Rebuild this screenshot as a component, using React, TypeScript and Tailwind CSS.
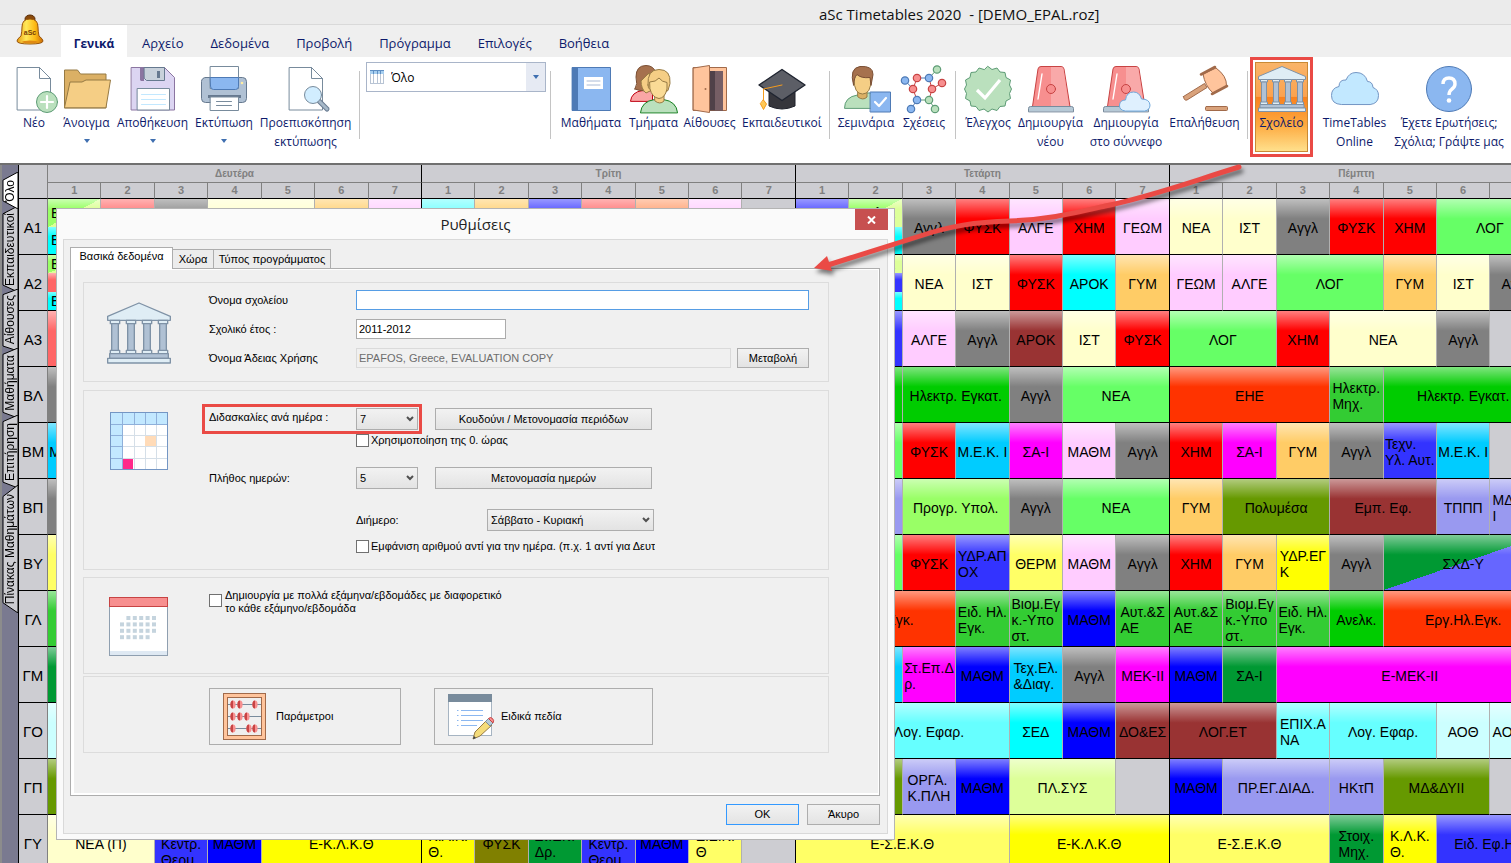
import type { ReactNode } from 'react';

type Cell = { text?: string; color?: string; span?: number; parts?: { text: string; color: string }[] };

const COLORS: Record<string, string> = {
  red: 'bg-[#ff0000]',
  salmon: 'bg-[#ff6666]',
  peach: 'bg-[#ff9966]',
  gray: 'bg-[#808080]',
  cream: 'bg-[#ffffcc]',
  pink: 'bg-[#ffccff]',
  orange: 'bg-[#ffcc66]',
  cyan: 'bg-[#00ffff]',
  aqua: 'bg-[#66ffff]',
  ice: 'bg-[#ccffff]',
  sky: 'bg-[#00ccff]',
  indigo: 'bg-[#3333ff]',
  blue: 'bg-[#0000ff]',
  lilac: 'bg-[#9999f0]',
  magenta: 'bg-[#ff00ff]',
  mint: 'bg-[#66ff66]',
  lime: 'bg-[#99ff66]',
  pale: 'bg-[#ddff99]',
  grass: 'bg-[#33cc33]',
  green: 'bg-[#00cc00]',
  forest: 'bg-[#009933]',
  moss: 'bg-[#669900]',
  olive: 'bg-[#808000]',
  brown: 'bg-[#993333]',
  flame: 'bg-[#ff3300]',
  lemon: 'bg-[#ffff66]',
  yellow: 'bg-[#ffff00]',
  split: 'bg-linear-[to_bottom_right,#009933_50%,#6666ff_50%]',
  limeSplit: 'bg-linear-[to_bottom_right,#99ff66_50%,#ddff99_50%]',
  none: 'bg-[#cdcdd2]',
};

const c = (text: string, color: string, span = 1): Cell => ({ text, color, span });
const e = (span = 1): Cell => ({ text: '', color: 'none', span });

const AGGL = c('Αγγλ', 'gray');
const FYSK = c('ΦΥΣΚ', 'red');
const HIM = c('ΧΗΜ', 'red');
const ALGE = c('ΑΛΓΕ', 'pink');
const GEOM = c('ΓΕΩΜ', 'pink');
const MATHP = c('ΜΑΘΜ', 'pink');
const MATHB = c('ΜΑΘΜ', 'blue');
const NEA = c('ΝΕΑ', 'cream');
const IST = c('ΙΣΤ', 'cream');
const GYM = c('ΓΥΜ', 'orange');
const LOG2 = c('ΛΟΓ', 'mint', 2);
const VIOM = c('Βιομ.Εγ\nκ.-Υπο\nστ.', 'grass');
const EID = c('Ειδ. Ηλ.\nΕγκ.', 'grass');
const AYT = c('Αυτ.&Σ\nΑΕ', 'grass');
const THERM = c('\nΚεντρ.\nΘερμ.', 'indigo');

const ROWS: { name: string; cells: Cell[] }[] = [
  {
    name: 'Α1',
    cells: [
      { parts: [{ text: 'Ε', color: 'limeSplit' }, { text: 'Ε', color: 'cyan' }] },
      c('', 'salmon'), c('', 'gray'), c('', 'cream', 2), c('', 'orange'), c('', 'pink'),
      c('', 'aqua'), c('', 'orange'), c('', 'indigo'), c('', 'salmon'), c('', 'peach'), c('', 'pink'), e(),
      c('', 'indigo'),
      { parts: [{ text: 'Αγγλ Λ', color: 'limeSplit' }, { text: 'Αγγλ ς', color: 'cyan' }] },
      AGGL, FYSK, ALGE, HIM, GEOM, NEA, IST, AGGL, FYSK, HIM, LOG2,
    ],
  },
  {
    name: 'Α2',
    cells: [
      { parts: [{ text: 'Ε', color: 'limeSplit' }, { text: '', color: 'salmon' }, { text: 'Ε', color: 'cyan' }] },
      e(14),
      { parts: [{ text: 'Αγγλ Λ', color: 'pale' }, { text: '', color: 'indigo' }, { text: 'Αγγλ κ', color: 'cyan' }] },
      NEA, IST, FYSK, c('ΑΡΟΚ', 'cyan'), GYM, GEOM, ALGE, LOG2, GYM, IST, AGGL,
    ],
  },
  {
    name: 'Α3',
    cells: [
      c('', 'salmon'), e(14), c('', 'indigo'),
      ALGE, AGGL, c('ΑΡΟΚ', 'brown'), IST, FYSK, LOG2, HIM, c('ΝΕΑ', 'cream', 2), AGGL, e(),
    ],
  },
  {
    name: 'ΒΛ',
    cells: [
      c('', 'gray'), e(14), c('', 'green'),
      c('Ηλεκτρ. Εγκατ.', 'green', 2), AGGL, c('ΝΕΑ', 'mint', 2),
      c('ΕΗΕ', 'flame', 3), c('Ηλεκτρ.\nΜηχ.', 'grass'), c('Ηλεκτρ. Εγκατ.', 'green', 3),
    ],
  },
  {
    name: 'ΒΜ',
    cells: [
      c('Μ.Ε.Κ. Ι', 'sky'), e(14), c('', 'mint'),
      FYSK, c('Μ.Ε.Κ. Ι', 'sky'), c('ΣΑ-Ι', 'magenta'), MATHP, AGGL,
      HIM, c('ΣΑ-Ι', 'magenta'), GYM, AGGL, c('Τεχν.\nΥλ. Αυτ.', 'indigo'), c('Μ.Ε.Κ. Ι', 'sky'), e(),
    ],
  },
  {
    name: 'ΒΠ',
    cells: [
      c('', 'gray'), e(14), c('', 'lilac'),
      c('Προγρ. Υπολ.', 'lime', 2), AGGL, c('ΝΕΑ', 'mint', 2),
      GYM, c('Πολυμέσα', 'moss', 2), c('Εμπ. Εφ.', 'brown', 2), c('ΤΠΠΠ', 'lilac'), c('ΜΔ&ΔΥ\nΙ', 'lilac'),
    ],
  },
  {
    name: 'ΒΥ',
    cells: [
      c('', 'lemon'), e(14), c('', 'mint'),
      FYSK, c('ΥΔΡ.ΑΠ\nΟΧ', 'indigo'), c('ΘΕΡΜ', 'lemon'), MATHP, AGGL,
      HIM, GYM, c('ΥΔΡ.ΕΓ\nΚ', 'yellow'), AGGL, c('ΣΧΔ-Υ', 'split', 3),
    ],
  },
  {
    name: 'ΓΛ',
    cells: [
      c('', 'grass'), e(13), c('Εργ.Ηλ.Εγκ.', 'flame', 3),
      EID, VIOM, MATHB, AYT, AYT, VIOM, EID, c('Ανελκ.', 'green'), c('Εργ.Ηλ.Εγκ.', 'flame', 3),
    ],
  },
  {
    name: 'ΓΜ',
    cells: [
      c('', 'forest'), e(14), c('', 'sky'),
      c('Στ.Επ.Δ\nρ.', 'magenta'), MATHB, c('Τεχ.Ελ.\n&Διαγ.', 'sky'), AGGL, c('ΜΕΚ-ΙΙ', 'magenta'),
      MATHB, c('ΣΑ-Ι', 'forest'), c('Ε-ΜΕΚ-ΙΙ', 'magenta', 5),
    ],
  },
  {
    name: 'ΓΟ',
    cells: [
      c('', 'ice'), e(14), c('Λογ. Εφαρ.', 'aqua', 3), c('ΣΕΔ', 'cyan'), MATHB, c('ΔΟ&ΕΣ', 'brown'),
      c('ΛΟΓ.ΕΤ', 'brown', 2), c('ΕΠΙΧ.Α\nΝΑ', 'aqua'), c('Λογ. Εφαρ.', 'aqua', 2), c('ΑΟΘ', 'ice'), c('ΑΟ&ΔΕ', 'ice'),
    ],
  },
  {
    name: 'ΓΠ',
    cells: [
      c('', 'moss'), e(14), c('', 'moss'),
      c('ΟΡΓΑ.\nΚ.ΠΛΗ', 'lilac'), MATHB, c('ΠΛ.ΣΥΣ', 'pale', 2), e(),
      MATHB, c('ΠΡ.ΕΓ.ΔΙΑΔ.', 'lilac', 2), c('ΗΚτΠ', 'lilac'), c('ΜΔ&ΔΥΙΙ', 'moss', 2), e(),
    ],
  },
  {
    name: 'ΓΥ',
    cells: [
      c('ΝΕΑ (Π)', 'cream', 2), THERM, MATHB, c('Ε-Κ.Λ.Κ.Θ', 'yellow', 3),
      c('Κ.Λ.Κ.\nΘ.', 'yellow'), c('ΦΥΣΚ', 'olive'), c('Στ.Επ.\nΔρ.', 'forest'), THERM, MATHB, c('Ε.Σ.Κ.\nΘ', 'lemon'), e(),
      c('Ε-Σ.Ε.Κ.Θ', 'lemon', 4), c('Ε-Κ.Λ.Κ.Θ', 'yellow', 3),
      c('Ε-Σ.Ε.Κ.Θ', 'lemon', 3), c('Στοιχ.\nΜηχ.', 'forest'), c('Κ.Λ.Κ.\nΘ.', 'yellow'), c('Ειδ. Εφ.Ηλ.', 'indigo', 2),
    ],
  },
];

const DAYS = ['Δευτέρα', 'Τρίτη', 'Τετάρτη', 'Πέμπτη'];
const PERIODS = [1, 2, 3, 4, 5, 6, 7];

const shine = 'bg-linear-to-b from-white/50 to-white/0 to-36%';

function TimetableCell({ cell, lastOfDay }: { cell: Cell; lastOfDay: boolean }) {
  const border = lastOfDay ? 'border-r-black' : 'border-r-[#b0b0b0]';
  return (
    <td colSpan={cell.span ?? 1} className={`h-[56px] border-r border-b border-b-black p-0 ${border}`}>
      {cell.parts ? (
        <div className="flex h-[55px] flex-col">
          {cell.parts.map((p, i) => (
            <div key={i} className={`min-h-0 flex-1 overflow-hidden ${COLORS[p.color]}`}>
              <div className={`flex h-full items-center whitespace-pre pl-[3px] ${shine}`}>{p.text}</div>
            </div>
          ))}
        </div>
      ) : (
        <div className={`h-[55px] ${COLORS[cell.color ?? 'none']}`}>
          <div className={`flex h-full items-center justify-center overflow-hidden pt-[2px] ${cell.color === 'none' ? '' : shine}`}>
            <span className="whitespace-pre text-left">{cell.text}</span>
          </div>
        </div>
      )}
    </td>
  );
}

function TimetableRow({ name, cells }: { name: string; cells: Cell[] }) {
  let col = 0;
  return (
    <tr>
      <th scope="row" className="border-r border-b border-r-[#808080] border-b-black bg-[#cdcdd2] p-0 pt-[2px] text-center text-[15px] font-normal">
        {name}
      </th>
      {cells.map((cell, i) => {
        col += cell.span ?? 1;
        return <TimetableCell key={i} cell={cell} lastOfDay={col % 7 === 0} />;
      })}
    </tr>
  );
}

function Timetable() {
  return (
    <table className="w-[102.2%] table-fixed border-separate border-spacing-0 text-[14px] leading-[16px] text-black">
      <colgroup>
        <col className="w-[29px]" />
        {DAYS.map((d) => PERIODS.map((p) => <col key={d + p} />))}
      </colgroup>
      <thead className="bg-[#cdcdd2] text-[10px] text-[#808080]">
        <tr>
          <th rowSpan={2} className="border-r border-b border-r-[#808080] border-b-black p-0" />
          {DAYS.map((d) => (
            <th key={d} colSpan={7} className="h-[18px] border-r border-b border-r-black border-b-[#808080] p-0 leading-[16px]">
              {d}
            </th>
          ))}
        </tr>
        <tr>
          {DAYS.map((d) =>
            PERIODS.map((p) => (
              <th
                key={d + p}
                className={`h-[16px] border-r border-b border-b-black p-0 text-[11px] leading-[15px] ${p === 7 ? 'border-r-black' : 'border-r-[#808080]'}`}
              >
                {p}
              </th>
            )),
          )}
        </tr>
      </thead>
      <tbody>
        {ROWS.map((r) => (
          <TimetableRow key={r.name} name={r.name} cells={r.cells} />
        ))}
      </tbody>
    </table>
  );
}

const VIEWS = [
  { label: 'Όλο', size: 'h-[37px]', active: true },
  { label: 'Εκπαιδευτικοί', size: 'h-[86px]' },
  { label: 'Αίθουσες', size: 'h-[62px]' },
  { label: 'Μαθήματα', size: 'h-[70px]' },
  { label: 'Επιτήρηση', size: 'h-[73px]' },
  { label: 'Πίνακας Μαθημάτων', size: 'h-[128px]' },
];

function ViewTabs() {
  return (
    <nav className="flex w-[19px] shrink-0 flex-col items-stretch border-r border-l-2 border-r-black border-l-[#8c8c8c] bg-[#7a7a90] pt-[7px]">
      {VIEWS.map((v) => (
        <button
          key={v.label}
          type="button"
          className={`relative -mb-[3px] flex items-center justify-center text-[12px] leading-[16px] text-black ${v.size} ${v.active ? 'z-10' : ''}`}
        >
          <svg className="absolute inset-0 h-full w-full" viewBox="0 0 16 100" preserveAspectRatio="none">
            <polygon
              points={v.active ? '16,0 1,22 1,78 16,100' : '16,0 1,9 1,92 16,100'}
              fill={v.active ? '#ffffff' : '#cdcdd2'}
              stroke="#000"
              vectorEffect="non-scaling-stroke"
            />
          </svg>
          <span className="relative rotate-180 whitespace-nowrap [writing-mode:vertical-rl]">{v.label}</span>
        </button>
      ))}
    </nav>
  );
}

/* ---------- icons ---------- */

function Icon({ children }: { children: ReactNode }) {
  return (
    <svg className="h-[48px] w-[48px] shrink-0 overflow-visible" viewBox="0 0 48 48" fill="none" strokeLinejoin="round" strokeLinecap="round">
      {children}
    </svg>
  );
}

const Sheet = () => (
  <path d="M7.500 2.500h22l11 11v31.500h-33z M29.500 2.500v11h11" fill="#fff" stroke="#788b9c" strokeLinejoin="miter" />
);

const NewIcon = () => (
  <Icon>
    <Sheet />
    <circle cx="37" cy="37" r="10.500" fill="#bae0bd" stroke="#5e9c76" />
    <path d="M37 31v12M31 37h12" stroke="#fff" strokeWidth="2.200" />
  </Icon>
);

const OpenIcon = () => (
  <Icon>
    <path d="M1.500 42.500v-37.500h13l3 4h25.500v33.500z" fill="#dbb065" stroke="#967a44" />
    <path d="M1.500 42.500l5.500-25.500h12l4-2h24.500l-4.500 27.500z" fill="#f5ce85" stroke="#967a44" />
  </Icon>
);

const SaveIcon = () => (
  <Icon>
    <path d="M2.500 2.500h33l10 10v32.500h-43z" fill="#dcd5f2" stroke="#8b75a1" />
    <path d="M11 3h4v13h-3l-1-1z" fill="#8b75a1" />
    <path d="M15.500 2.500h20v13h-18l-2-2z" fill="#c8d1db" stroke="#66798f" />
    <path d="M28 6h3v7h-3z" fill="#66798f" />
    <path d="M8.500 23.500h32v21.500h-32z" fill="#fff" stroke="#788b9c" />
    <path d="M12.500 29.500h24M12.500 34.500h24M12.500 39.500h24" stroke="#c2e8ff" />
  </Icon>
);

const PrintIcon = () => (
  <Icon>
    <rect x="1.500" y="12.500" width="45" height="25" rx="4" fill="#b0c1d4" stroke="#66798f" />
    <path d="M10.500 1.500h28v22h-28z" fill="#fff" stroke="#788b9c" />
    <path d="M10.500 12.500h28v9q0 3-3 3h-22q-3 0-3-3z" fill="#8bb7f0" stroke="#4e7ab5" />
    <rect x="8" y="30" width="33" height="3" fill="#66798f" />
    <path d="M10.500 32h28v13.500h-28z" fill="#fff" stroke="#788b9c" />
    <path d="M16.500 36.500h15M16.500 40.500h15" stroke="#788b9c" />
    <circle cx="42" cy="18" r="1.300" fill="#ffeea3" />
  </Icon>
);

const PreviewIcon = () => (
  <Icon>
    <Sheet />
    <path d="M37 36l8 8" stroke="#66798f" strokeWidth="5" />
    <path d="M37 36l8 8" stroke="#a6b8c8" strokeWidth="3" />
    <circle cx="31" cy="30" r="8.500" fill="#d1edff" stroke="#788b9c" />
  </Icon>
);

const BookIcon = () => (
  <Icon>
    <rect x="5.500" y="2.500" width="38" height="43" fill="#8bb7f0" stroke="#4e7ab5" />
    <rect x="5" y="2" width="6" height="44" fill="#4e7ab5" />
    <rect x="17" y="12" width="19" height="12" fill="#fff" />
    <path d="M20 16h13M20 20h13" stroke="#a9bad6" />
  </Icon>
);

const ClassesIcon = () => (
  <Icon>
    <path d="M.5 36q1-9 12-10.500h10v10.500z" fill="#faa6a6" stroke="#c00010" />
    <path d="M5 24q3-5 1-12Q6 .500 16 .500q8 0 10 8l-3 16q-10 3-18-.5z" fill="#a6714e" stroke="#7a4f34" />
    <path d="M11 16l8-8 3 17-6 3q-5-4-5-12z" fill="#f5ce85" stroke="#967a44" />
    <path d="M10.500 47.500q1-11 14-13h9q13 2 14 13z" fill="#bae0bd" stroke="#168020" />
    <path d="M25 29h9v7q-4 4-9 0z" fill="#f5ce85" stroke="#967a44" />
    <path d="M18 20Q17 4.500 29 4.500q12 0 11 14l-2 7-9 4-9-5q-2-1-2-4.500z" fill="#f5ce85" stroke="#967a44" />
    <path d="M20 17q6 0 9-4 3 4 8 4.500V24q-2 9-8 9.500-7-1-9-9.500z" fill="#fadb96" stroke="#967a44" />
  </Icon>
);

const DoorIcon = () => (
  <Icon>
    <path d="M7.500 2.500h33v43h-33z" fill="#ffc49c" stroke="#a16a4a" />
    <path d="M11 6h26v39.500H11z" fill="#504149" />
    <path d="M29 6h8v39.500h-8z" fill="#765e65" />
    <path d="M7.500 3l16-2.500v47L7.500 45z" fill="#ffc49c" stroke="#a16a4a" />
    <circle cx="19.500" cy="24" r="1" fill="#a16a4a" />
  </Icon>
);

const TeacherIcon = () => (
  <Icon>
    <path d="M11 24v17q13 6 26 0V24z" fill="#36363c" stroke="#1f212b" />
    <path d="M24 4.500L47 20 24 35.500 1 20z" fill="#5c5e66" stroke="#1f2430" strokeWidth="1.400" />
    <path d="M24 20L5.500 24v14" stroke="#f59b1d" />
    <path d="M5.500 35l3 4-3 5.500-3-5.500z" fill="#ffc957" stroke="#f59b1d" />
  </Icon>
);

const SeminarIcon = () => (
  <Icon>
    <path d="M2.500 43q0-11 13-13l4-2h8l6 3v12z" fill="#bae0bd" stroke="#5e9c76" />
    <path d="M16 25h9v7q-4 4-9 0z" fill="#dbb065" stroke="#967a44" />
    <path d="M12 14q0-7 8.500-7T29 14q0 15-8.500 15T12 14z" fill="#f5ce85" stroke="#967a44" />
    <path d="M11.500 20Q7 3 18 1.500q13-1 13 8l-2 11-1-8q-9 1-13-3-3 3-3.500 10.500z" fill="#a6714e" stroke="#7a4f34" />
    <rect x="28.500" y="27" width="20" height="20" fill="#8bb7f0" stroke="#4e7ab5" />
    <path d="M33 37l4 4 7-8" stroke="#fff" strokeWidth="2.200" />
  </Icon>
);

const NODES: [number, number, string, string][] = [
  [17, 13, '#f78f8f', '#c74343'],
  [29, 13, '#8bb7f0', '#4e7ab5'],
  [13, 24, '#f78f8f', '#c74343'],
  [32, 24, '#f78f8f', '#c74343'],
  [17, 35, '#8bb7f0', '#4e7ab5'],
  [29, 35, '#bae0bd', '#5e9c76'],
  [37, 4.5, '#bae0bd', '#5e9c76'],
  [42, 18, '#f78f8f', '#c74343'],
  [5, 15.5, '#8bb7f0', '#4e7ab5'],
  [11, 44, '#8bb7f0', '#4e7ab5'],
  [35, 44, '#bae0bd', '#5e9c76'],
];

const RelationsIcon = () => (
  <Icon>
    <path d="M29 13l3 11 10-6M32 24l-3 11M17 35l-4-11 4-11" stroke="#c74343" />
    <path d="M5 15.500l8 8.500M17 13h12M17 35l-6 9" stroke="#4e7ab5" />
    <path d="M29 13l8-8.500M17 35h12l6 9" stroke="#5e9c76" />
    {NODES.map(([x, y, fill, stroke], i) => (
      <circle key={i} cx={x} cy={y} r="3.700" fill={fill} stroke={stroke} strokeWidth="1.200" />
    ))}
  </Icon>
);

const CheckIcon = () => (
  <Icon>
    <path
      d="M24 1.500l4 3 5-1.500 3 4 5 .5 1 5 4.500 2.500-1 5 2 4-2 4.500 1 5-4.500 2.500-1 5-5 .5-3 4-5-1.500-4 3-4-3-5 1.500-3-4-5-.5-1-5-4.500-2.500 1-5-2-4.500 2-4-1-5L6 12.500l1-5 5-.5 3-4 5 1.500z"
      fill="#bae0bd"
      stroke="#5e9c76"
    />
    <path d="M13 25l8 8 15-18" stroke="#fff" strokeWidth="3.200" strokeLinecap="butt" strokeLinejoin="miter" />
  </Icon>
);

const Siren = () => (
  <>
    <path d="M5.500 41.500L11 4q.500-2.500 3-2.500h20q2.500 0 3 2.500l6 37.500z" fill="#f78f8f" stroke="#c74343" />
    <path d="M24 2h10q2 0 2.500 2l5.500 37H24z" fill="#f9a9a9" />
    <path d="M15 9l-4 25" stroke="#fff" strokeWidth="1.400" />
    <circle cx="24" cy="24" r="4.500" fill="#f78f8f" stroke="#c74343" />
    <path d="M1.500 46.500v-3q0-2 2-2h41q2 0 2 2v3z" fill="#b6c9d6" stroke="#788b9c" />
  </>
);

const SirenIcon = () => (
  <Icon>
    <Siren />
  </Icon>
);

const SirenCloudIcon = () => (
  <Icon>
    <Siren />
    <path d="M23 46q-6-1-5.500-6t6-5q1-8 8-8 6 0 8 7 8 0 8.500 6 0 5-5 6z" fill="#dff0fe" stroke="#6fa8dc" />
  </Icon>
);

const GavelIcon = () => (
  <Icon>
    <path d="M2.500 31.500l21-13 2.500 4-20 12.500q-3 1-3.500-3.500z" fill="#d9a27b" stroke="#a16a4a" />
    <path d="M22 9l13-6q11 8 10.500 18L32 28q-8-7-10-19z" fill="#ffc49c" stroke="#a16a4a" />
    <path d="M20 9.500L34 2M31 29l15-8" stroke="#a16a4a" strokeWidth="2.600" />
    <rect x="24.500" y="41.500" width="22" height="4" rx="1" fill="#d9a27b" stroke="#a16a4a" />
  </Icon>
);

function Building({ className }: { className: string }) {
  return (
    <svg className={className} viewBox="0 0 48 48" fill="none" strokeLinejoin="round">
      <path d="M.5 14.500v-3L24 1.500l23.500 10v3z" fill="#dfedf5" stroke="#7f92a6" />
      {[3, 15, 27, 39].map((x) => (
        <g key={x}>
          <rect x={x - 0.5} y="14.500" width="7" height="2.500" fill="#dfedf5" stroke="#7f92a6" />
          <rect x={x + 0.5} y="17" width="5" height="21" fill="#b0c1d4" stroke="#7f92a6" />
          <rect x={x - 0.5} y="37" width="7" height="2.500" fill="#dfedf5" stroke="#7f92a6" />
        </g>
      ))}
      <rect x="2" y="39.500" width="44" height="3.500" fill="#b0c1d4" stroke="#7f92a6" />
      <rect x=".5" y="43" width="47" height="3.500" fill="#dfedf5" stroke="#7f92a6" />
    </svg>
  );
}

const CloudIcon = () => (
  <Icon>
    <path
      d="M10 39.500Q.5 39 .5 30.500.500 23 8 21.500q0-7 7-6.500Q18 7.500 25 7.500q9 0 11.500 9 5 0 5.500 6 5.500 2 5.500 8 0 8-8 9z"
      fill="#c2e8ff"
      stroke="#7496c4"
    />
  </Icon>
);

const HelpIcon = () => (
  <Icon>
    <circle cx="24" cy="24" r="22.500" fill="#8bb7f0" stroke="#4e7ab5" />
    <path d="M18 19q0-6 6-6t6 6q0 3-3.500 5.500Q24 26.500 24 30" stroke="#fff" strokeWidth="3.400" strokeLinecap="butt" />
    <circle cx="24" cy="35.500" r="2.300" fill="#fff" />
  </Icon>
);

function BellIcon() {
  return (
    <svg className="absolute top-[14px] left-[16px] h-[31px] w-[28px]" viewBox="0 0 28 31">
      <defs>
        <linearGradient id="bell" x1="0" x2="1">
          <stop offset="0" stopColor="#e89a10" />
          <stop offset=".35" stopColor="#ffe95a" />
          <stop offset=".7" stopColor="#fdb913" />
          <stop offset="1" stopColor="#c96a08" />
        </linearGradient>
      </defs>
      <ellipse cx="14" cy="5" rx="5" ry="4" fill="#8a4a0c" stroke="#5a2c05" />
      <path d="M5 22q1-5 1-9 0-8 8-8t8 8q0 4 1 9 4 3 4 5 0 3-13 3T1 27q0-2 4-5z" fill="url(#bell)" stroke="#9a560c" />
      <ellipse cx="14" cy="28" rx="8" ry="1.500" fill="#e08a12" />
      <text x="14" y="21" textAnchor="middle" fontFamily="Liberation Sans" fontWeight="bold" fontSize="7" fill="#7a3f06">
        aSc
      </text>
    </svg>
  );
}

/* ---------- ribbon ---------- */

const MENU = ['Αρχείο', 'Δεδομένα', 'Προβολή', 'Πρόγραμμα', 'Επιλογές', 'Βοήθεια'];

function RibbonButton({ icon, label, width, arrow }: { icon: ReactNode; label: string; width: string; arrow?: boolean }) {
  return (
    <button type="button" className={`flex shrink-0 flex-col items-center whitespace-pre text-[#0d1a6b] ${width}`}>
      {icon}
      <span>{label}</span>
      {arrow ? (
        <svg className="mt-[7px] h-[4px] w-[6px]" viewBox="0 0 6 4">
          <path d="M0 0h6L3 4z" fill="#3f6fb0" />
        </svg>
      ) : null}
    </button>
  );
}

const Separator = ({ className }: { className: string }) => (
  <div className={`mt-[6px] h-[68px] w-px shrink-0 bg-[#c4c4c4] ${className}`} />
);

function Ribbon() {
  return (
    <div className="flex h-[106px] items-start bg-white pt-[8px] pl-[10px] text-[12px] leading-[19px]">
      <RibbonButton icon={<NewIcon />} label="Νέο" width="w-[48px]" />
      <RibbonButton icon={<OpenIcon />} label="Άνοιγμα" width="w-[57px]" arrow />
      <RibbonButton icon={<SaveIcon />} label="Αποθήκευση" width="w-[75px]" arrow />
      <RibbonButton icon={<PrintIcon />} label="Εκτύπωση" width="w-[68px]" arrow />
      <RibbonButton icon={<PreviewIcon />} label={'Προεπισκόπηση\nεκτύπωσης'} width="w-[95px]" />
      <Separator className="mr-[6px] ml-[6px]" />
      <div className="relative -mt-[3px] flex h-[30px] w-[180px] shrink-0 border border-[#a9b5c9]">
        <svg className="absolute top-[7px] left-[3px] h-[14px] w-[14px]" viewBox="0 0 14 14">
          <path d="M0 0h14v4H0z" fill="#a7cff0" />
          <path d="M.5 4v9.500M3.500 4v9.500M7.500 4v9.500M10.500 4v9.500M13.500 4v9.500M0 13.500h14" stroke="#b8c4d4" />
          <path d="M0 .5h14M3.500 0v4M7.500 0v4M10.500 0v4" stroke="#5e8fc4" />
        </svg>
        <select aria-label="Προβολή" className="flex-1 appearance-none pl-[24px] text-[12px] text-black outline-none">
          <option>Όλο</option>
        </select>
        <span className="pointer-events-none absolute inset-y-0 right-0 flex w-[19px] items-center justify-center bg-[#e6eaf3]">
          <svg className="h-[4px] w-[6px]" viewBox="0 0 6 4">
            <path d="M0 0h6L3 4z" fill="#3f6fb0" />
          </svg>
        </span>
      </div>
      <Separator className="mr-[4px] ml-[4px]" />
      <RibbonButton icon={<BookIcon />} label="Μαθήματα" width="w-[72px]" />
      <RibbonButton icon={<ClassesIcon />} label="Τμήματα" width="w-[53px]" />
      <RibbonButton icon={<DoorIcon />} label="Αίθουσες" width="w-[59px]" />
      <RibbonButton icon={<TeacherIcon />} label="Εκπαιδευτικοί" width="w-[86px]" />
      <Separator className="mr-[5px] ml-[4px]" />
      <RibbonButton icon={<SeminarIcon />} label="Σεμινάρια" width="w-[62px]" />
      <RibbonButton icon={<RelationsIcon />} label="Σχέσεις" width="w-[54px]" />
      <Separator className="mr-[4px] ml-[4px]" />
      <RibbonButton icon={<CheckIcon />} label="Έλεγχος" width="w-[56px]" />
      <RibbonButton icon={<SirenIcon />} label={'Δημιουργία\nνέου'} width="w-[69px]" />
      <RibbonButton icon={<SirenCloudIcon />} label={'Δημιουργία\nστο σύννεφο'} width="w-[82px]" />
      <RibbonButton icon={<GavelIcon />} label="Επαλήθευση" width="w-[75px]" />
      <Separator className="mr-[2px] ml-[5px]" />
      <div className="-mt-[8px] shrink-0 border-3 border-[#ea4a45] p-[2px]">
        <button
          type="button"
          className="flex h-[90px] w-[53px] flex-col items-center border border-[#c98a35] bg-linear-[to_bottom,#f9b469_0%,#fba24f_38%,#f9821f_39%,#fda93f_70%,#ffe08c_100%] pt-[2px] text-[#0d1a6b]"
        >
          <Building className="h-[48px] w-[48px] shrink-0" />
          <span>Σχολείο</span>
        </button>
      </div>
      <RibbonButton icon={<CloudIcon />} label={'TimeTables\nOnline'} width="ml-[4px] w-[75px]" />
      <RibbonButton icon={<HelpIcon />} label={'Έχετε Ερωτήσεις;\nΣχόλια; Γράψτε μας'} width="w-[114px]" />
    </div>
  );
}

/* ---------- settings dialog ---------- */

const buttonStyle = 'border border-[#adadad] bg-linear-to-b from-[#f2f2f2] to-[#e3e3e3] text-center';

function SelectBox({ id, value, className }: { id: string; value: string; className: string }) {
  return (
    <div className={`relative h-[22px] shrink-0 ${className}`}>
      <select
        id={id}
        className="h-full w-full appearance-none border border-[#adadad] bg-linear-to-b from-[#f2f2f2] to-[#e3e3e3] pl-[3px] outline-none"
      >
        <option>{value}</option>
      </select>
      <svg className="pointer-events-none absolute top-[8px] right-[4px] h-[6px] w-[8px]" viewBox="0 0 8 6">
        <path d="M1 1l3 3 3-3" fill="none" stroke="#505050" strokeWidth="2" />
      </svg>
    </div>
  );
}

const Check = ({ id }: { id: string }) => (
  <input id={id} type="checkbox" className="h-[13px] w-[13px] shrink-0 appearance-none border border-[#707070] bg-white" />
);

function Group({ icon, children, className }: { icon?: ReactNode; children: ReactNode; className: string }) {
  return (
    <section className={`flex border border-[#dcdcdc] ${className}`}>
      <div className="flex w-[125px] shrink-0 justify-center pr-[16px]">{icon}</div>
      <div className="min-w-0 flex-1">{children}</div>
    </section>
  );
}

function WeekIcon() {
  return (
    <svg className="mt-[8px] h-[58px] w-[58px]" viewBox="0 0 58 58">
      <rect x=".5" y=".5" width="57" height="57" fill="#fff" />
      <path d="M0 0h58v12H12v46H0z" fill="#c2e8ff" />
      <path d="M12.500 12v46M24.500 12v46M35.500 12v46M46.500 12v46M12 23.500h46M12 34.500h46M12 46.500h46" stroke="#d5dfe8" />
      <path d="M12.500 0v12M24.500 0v12M35.500 0v12M46.500 0v12M0 12.500h12M0 23.500h12M0 34.500h12M0 46.500h12M12 12.500h46M12.500 12v46" stroke="#8fb0da" />
      <rect x="35" y="24" width="11" height="10" fill="#ffdbb8" />
      <rect x="13" y="47" width="10" height="10" fill="#ff2a8a" />
      <rect x=".5" y=".5" width="57" height="57" fill="none" stroke="#7496c4" />
    </svg>
  );
}

const DOTS = ['011111', '111111', '111111', '111110'];

function CalendarIcon() {
  return (
    <svg className="mt-[8px] h-[59px] w-[59px]" viewBox="0 0 59 59">
      <rect x=".5" y=".5" width="58" height="58" fill="#fff" stroke="#8f9fb0" />
      <rect x="1" y="54" width="57" height="4" fill="#dfe9f3" />
      <rect x=".5" y=".5" width="58" height="9" fill="#f78f8f" stroke="#c74343" />
      {DOTS.map((row, y) =>
        row.split('').map((d, x) =>
          d === '1' ? <rect key={`${x}-${y}`} x={11 + x * 6.4} y={19 + y * 6.4} width="4" height="4" fill="#c5d4de" /> : null,
        ),
      )}
    </svg>
  );
}

const BEADS = [
  [10, 17, 32],
  [10, 17, 24],
  [10, 26, 32],
];

function AbacusIcon() {
  return (
    <svg className="h-[47px] w-[43px]" viewBox="0 0 43 47">
      <rect x=".5" y=".5" width="42" height="46" fill="#ffc49c" stroke="#a16a4a" />
      <rect x="4.500" y="4.500" width="34" height="38" fill="#efefef" stroke="#a16a4a" />
      {BEADS.map((row, i) => (
        <g key={i}>
          <path d={`M5 ${11.5 + i * 12}h33`} stroke="#788b9c" />
          {row.map((x) => (
            <g key={x}>
              <ellipse cx={x} cy={11.5 + i * 12} rx="2.600" ry="4" fill="#f78f8f" />
              <path d={`M${x} ${7.5 + i * 12}a2.600 4 0 0 0 0 8z`} fill="#c74343" />
            </g>
          ))}
        </g>
      ))}
    </svg>
  );
}

function FieldsIcon() {
  return (
    <svg className="h-[46px] w-[47px]" viewBox="0 0 47 46">
      <rect x=".5" y=".5" width="43" height="41" fill="#fff" stroke="#a6b4c2" />
      <rect x="0" y="0" width="44" height="8" fill="#788b9c" />
      <path d="M13 16.500h22M13 21.500h22M13 26.500h22M13 31.500h16M9 16.500h1.500M9 21.500h1.500M9 26.500h1.500M9 31.500h1.500" stroke="#8bb7f0" />
      <path d="M25 45l2-7 12-12 5 5-12 11z" fill="#f5dc7a" stroke="#967a44" />
      <path d="M37.500 27.500l3-3 4.500 4.500-3 3z" fill="#b6c9d6" stroke="#788b9c" />
      <path d="M40.500 24.500q2-2 4 0t.500 4.500z" fill="#f78f8f" stroke="#c74343" />
      <path d="M25 45l1-3 2 2z" fill="#36404d" />
    </svg>
  );
}

function SettingsDialog() {
  return (
    <div
      role="dialog"
      aria-labelledby="dialog-title"
      className="absolute top-[43px] left-[56px] z-20 w-[839px] border border-[#b4b4b4] bg-[#fafafa] px-[6px] pb-[5px] text-[11px] leading-[13px] text-black"
    >
      <header className="grid h-[30px] grid-cols-[1fr_auto_1fr]">
        <h1 id="dialog-title" className="col-start-2 pt-[4px] font-['Open_Sans','Noto_Sans',sans-serif] text-[15px] leading-[22px] text-[#222]">
          Ρυθμίσεις
        </h1>
        <button type="button" aria-label="Κλείσιμο" className="flex h-[21px] w-[33px] items-center justify-center justify-self-end bg-[#c75050]">
          <svg className="h-[8px] w-[9px]" viewBox="0 0 9 8">
            <path d="M1 .5l7 7M8 .5l-7 7" stroke="#fff" strokeWidth="2" />
          </svg>
        </button>
      </header>
      <div className="border border-[#d9d9d9] bg-[#f0f0f0] pt-[7px] pr-[7px] pb-[8px] pl-[6px]">
        <div role="tablist" className="relative z-10 -mb-px flex items-end">
          <button type="button" role="tab" aria-selected="true" className="h-[22px] w-[103px] border border-b-0 border-[#adadad] bg-white pb-[4px]">
            Βασικά δεδομένα
          </button>
          <button type="button" role="tab" className="h-[20px] w-[41px] border border-l-0 border-[#adadad] bg-[#ececec]">
            Χώρα
          </button>
          <button type="button" role="tab" className="h-[20px] w-[117px] border border-l-0 border-[#adadad] bg-[#ececec]">
            Τύπος προγράμματος
          </button>
        </div>
        <div className="border border-[#adadad] bg-[#f0f0f0] pt-[13px] pr-[50px] pb-[42px] pl-[12px] shadow-[inset_3px_1px_0_#fff,inset_-1px_-2px_0_#fff]">
          <Group className="pt-[7px] pb-[13px]" icon={<Building className="mt-[11px] h-[64px] w-[64px]" />}>
            <div className="grid grid-cols-[147px_1fr] items-center gap-y-[9px] pr-[19px]">
              <label htmlFor="school">Όνομα σχολείου</label>
              <input id="school" type="text" className="h-[20px] border border-[#569de5] bg-white px-[3px] outline-none" />
              <label htmlFor="year">Σχολικό έτος :</label>
              <input id="year" type="text" defaultValue="2011-2012" className="h-[20px] w-[150px] border border-[#ababab] bg-white px-[2px] outline-none" />
              <label htmlFor="licence">Όνομα Άδειας Χρήσης</label>
              <div className="flex items-center gap-[6px]">
                <input
                  id="licence"
                  type="text"
                  readOnly
                  defaultValue="EPAFOS, Greece, EVALUATION COPY"
                  className="h-[20px] min-w-0 flex-1 border border-[#dadada] bg-[#f0f0f0] px-[2px] text-[#6d6d6d] outline-none"
                />
                <button type="button" className={`h-[20px] w-[72px] ${buttonStyle}`}>
                  Μεταβολή
                </button>
              </div>
            </div>
          </Group>

          <Group className="mt-[8px] pt-[13px] pb-[16px]" icon={<WeekIcon />}>
            <div className="relative flex h-[30px] items-center">
              <div className="pointer-events-none absolute top-0 -left-[7px] h-[30px] w-[220px] border-3 border-[#ea4a45]" />
              <label htmlFor="periods" className="w-[147px] shrink-0 pb-[3px]">Διδασκαλίες ανά ημέρα :</label>
              <SelectBox id="periods" value="7" className="w-[62px]" />
              <button type="button" className={`ml-[17px] h-[22px] w-[217px] ${buttonStyle}`}>
                Κουδούνι / Μετονομασία περιόδων
              </button>
            </div>
            <div className="ml-[147px] flex items-center gap-[2px]">
              <Check id="zero" />
              <label htmlFor="zero">Χρησιμοποίηση της 0. ώρας</label>
            </div>
            <div className="mt-[20px] flex items-center">
              <label htmlFor="days" className="w-[147px] shrink-0">Πλήθος ημερών:</label>
              <SelectBox id="days" value="5" className="w-[62px]" />
              <button type="button" className={`ml-[17px] h-[22px] w-[217px] ${buttonStyle}`}>
                Μετονομασία ημερών
              </button>
            </div>
            <div className="mt-[20px] ml-[147px] flex items-center">
              <label htmlFor="weekend" className="w-[131px]">Διήμερο:</label>
              <SelectBox id="weekend" value="Σάββατο - Κυριακή" className="w-[167px]" />
            </div>
            <div className="mt-[9px] ml-[147px] flex w-[299px] items-center gap-[2px] overflow-hidden whitespace-nowrap">
              <Check id="number" />
              <label htmlFor="number">Εμφάνιση αριθμού αντί για την ημέρα. (π.χ. 1 αντί για Δευτέρα)</label>
            </div>
          </Group>

          <Group className="mt-[7px] pt-[11px] pb-[17px]" icon={<CalendarIcon />}>
            <div className="flex items-start gap-[3px]">
              <div className="flex pt-[5px]">
                <Check id="multi" />
              </div>
              <label htmlFor="multi">
                Δημιουργία με πολλά εξάμηνα/εβδομάδες με διαφορετικό
                <br />
                το κάθε εξάμηνο/εβδομάδα
              </label>
            </div>
          </Group>

          <Group className="mt-[2px] pt-[11px] pb-[7px]">
            <div className="flex gap-[33px]">
              <button type="button" className="flex h-[57px] w-[192px] items-center gap-[10px] border border-[#adadad] pl-[13px]">
                <AbacusIcon />
                Παράμετροι
              </button>
              <button type="button" className="flex h-[57px] w-[219px] items-center gap-[6px] border border-[#adadad] pl-[13px]">
                <FieldsIcon />
                Ειδικά πεδία
              </button>
            </div>
          </Group>
        </div>
        <div className="mt-[8px] flex justify-end gap-[8px]">
          <button type="button" className="h-[21px] w-[73px] border border-[#3399ff] bg-linear-to-b from-[#f2f2f2] to-[#e3e3e3]">
            OK
          </button>
          <button type="button" className={`h-[21px] w-[73px] ${buttonStyle}`}>
            Άκυρο
          </button>
        </div>
      </div>
    </div>
  );
}

function Arrow() {
  return (
    <svg
      className="pointer-events-none absolute top-[160px] left-[810px] z-30 h-[120px] w-[440px] drop-shadow-[2px_4px_2px_rgba(0,0,0,0.5)]"
      viewBox="810 160 440 120"
      fill="none"
    >
      <path d="M1239 167C1190 182 1150 197 1105 206C1070 214 1045 220 1010 221C975 222 950 226 920 236L828 265" stroke="#ea4a45" strokeWidth="5" strokeLinecap="round" />
      <path d="M814 268L827 256L832 271Z" fill="#ea4a45" />
    </svg>
  );
}

export default function App() {
  return (
    <div className="relative flex h-screen flex-col overflow-hidden bg-white font-['Liberation_Sans',Arial,sans-serif]">
      <div className="shrink-0 font-['Open_Sans','Noto_Sans',sans-serif]">
        <div className="h-[25px] border-b border-[#d9d9d9] bg-[#ebebeb] pl-[54.2%] text-[15px] leading-[28px] whitespace-pre text-[#111]">
          {'aSc Timetables 2020  - [DEMO_EPAL.roz]'}
        </div>
        <BellIcon />
        <nav className="flex h-[32px] items-stretch bg-[#efefef] pl-[61px] text-[13px] leading-[37px] text-[#0d1a6b]">
          <button type="button" className="mr-[15px] w-[66px] bg-white text-[12px] font-bold">
            Γενικά
          </button>
          <div className="flex gap-[27px]">
            {MENU.map((m) => (
              <button key={m} type="button">
                {m}
              </button>
            ))}
          </div>
        </nav>
        <Ribbon />
      </div>
      <main className="relative flex min-h-0 flex-1 border-t-2 border-[#707070]">
        <ViewTabs />
        <div className="min-w-0 flex-1 overflow-hidden">
          <Timetable />
        </div>
        <SettingsDialog />
      </main>
      <Arrow />
    </div>
  );
}
